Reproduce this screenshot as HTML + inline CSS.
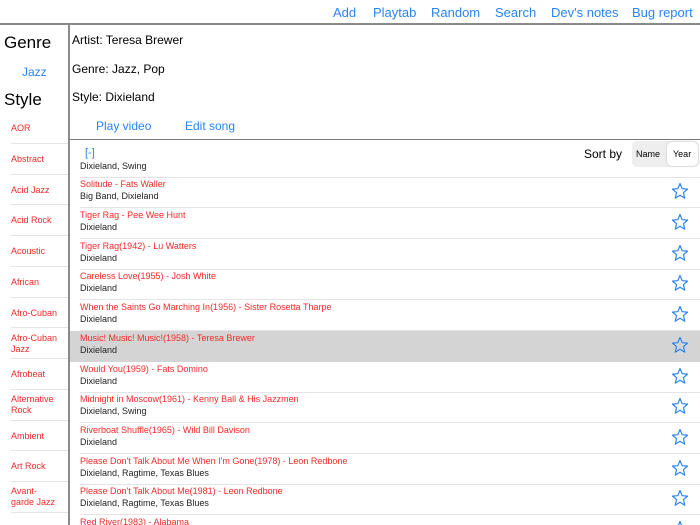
<!DOCTYPE html>
<html><head><meta charset="utf-8"><style>
*{margin:0;padding:0;box-sizing:border-box}
html,body{width:700px;height:525px;overflow:hidden}
body{background:#fff;font-family:"Liberation Sans",sans-serif;position:relative;color:#000}
.a{position:absolute;white-space:nowrap}
.nav{top:5px;font-size:13px;color:#2a84f6}
.blue{color:#2a84f6}
.side{left:11px;font-size:9px;color:#f42a2a;line-height:11px}
.sep{position:absolute;height:1px;background:#e4e4e4}
.row{position:absolute;left:0;width:630px;height:31px}
.row .t{position:absolute;left:10px;top:2px;font-size:9px;color:#f42a2a;white-space:nowrap}
.row .s{position:absolute;left:10px;top:14px;font-size:9px;color:#222;white-space:nowrap}
.row svg{position:absolute;left:601px;top:5px}
.row .l{position:absolute;left:10px;right:0;bottom:0;height:1px;background:#e4e4e4}
</style></head><body>
<div class="a nav" style="left:333px">Add</div>
<div class="a nav" style="left:373px">Playtab</div>
<div class="a nav" style="left:431px">Random</div>
<div class="a nav" style="left:495px">Search</div>
<div class="a nav" style="left:551px">Dev's notes</div>
<div class="a nav" style="left:632px">Bug report</div>
<div class="a" style="left:0;top:23px;width:700px;height:2px;background:#8a8a8a"></div>
<div class="a" style="left:68px;top:24px;width:2px;height:501px;background:#8a8a8a"></div>

<div class="a" style="left:4px;top:33px;font-size:17px">Genre</div>
<div class="a blue" style="left:22px;top:65px;font-size:12px">Jazz</div>
<div class="a" style="left:4px;top:90px;font-size:17px">Style</div>

<div class="a" style="left:72px;top:33px;font-size:12px">Artist: Teresa Brewer</div>
<div class="a" style="left:72px;top:62px;font-size:12px">Genre: Jazz, Pop</div>
<div class="a" style="left:72px;top:90px;font-size:12px">Style: Dixieland</div>
<div class="a blue" style="left:96px;top:119px;font-size:12px">Play video</div>
<div class="a blue" style="left:185px;top:119px;font-size:12px">Edit song</div>
<div class="a" style="left:70px;top:139px;width:630px;height:1px;background:#777"></div>

<div class="a side" style="top:123px">AOR</div>
<div class="a side" style="top:154px">Abstract</div>
<div class="a side" style="top:185px">Acid Jazz</div>
<div class="a side" style="top:215px">Acid Rock</div>
<div class="a side" style="top:246px">Acoustic</div>
<div class="a side" style="top:277px">African</div>
<div class="a side" style="top:308px">Afro-Cuban</div>
<div class="a side" style="top:333px">Afro-Cuban<br>Jazz</div>
<div class="a side" style="top:369px">Afrobeat</div>
<div class="a side" style="top:394px">Alternative<br>Rock</div>
<div class="a side" style="top:431px">Ambient</div>
<div class="a side" style="top:461px">Art Rock</div>
<div class="a side" style="top:486px">Avant-<br>garde Jazz</div>
<div class="sep" style="left:11px;width:57px;top:143px"></div>
<div class="sep" style="left:11px;width:57px;top:174px"></div>
<div class="sep" style="left:11px;width:57px;top:204px"></div>
<div class="sep" style="left:11px;width:57px;top:235px"></div>
<div class="sep" style="left:11px;width:57px;top:266px"></div>
<div class="sep" style="left:11px;width:57px;top:297px"></div>
<div class="sep" style="left:11px;width:57px;top:327px"></div>
<div class="sep" style="left:11px;width:57px;top:358px"></div>
<div class="sep" style="left:11px;width:57px;top:389px"></div>
<div class="sep" style="left:11px;width:57px;top:420px"></div>
<div class="sep" style="left:11px;width:57px;top:450px"></div>
<div class="sep" style="left:11px;width:57px;top:481px"></div>
<div class="sep" style="left:11px;width:57px;top:512px"></div>

<div class="a" style="left:70px;top:160px;width:630px;height:365px;overflow:hidden">
<div class="row" style="top:-13px"><div class="s">Dixieland, Swing</div><div class="l"></div></div>
<div class="row" style="top:17px"><div class="t">Solitude - Fats Waller</div><div class="s">Big Band, Dixieland</div><svg width="18" height="18" viewBox="0 0 24 24"><path d="M12 2l2.9 6.9 7.1.6-5.4 4.7 1.7 7.3L12 17.6 5.7 21.5l1.7-7.3L2 9.5l7.1-.6z" fill="none" stroke="#2a84f6" stroke-width="1.6" stroke-linejoin="round"/></svg><div class="l"></div></div>
<div class="row" style="top:48px"><div class="t">Tiger Rag - Pee Wee Hunt</div><div class="s">Dixieland</div><svg width="18" height="18" viewBox="0 0 24 24"><path d="M12 2l2.9 6.9 7.1.6-5.4 4.7 1.7 7.3L12 17.6 5.7 21.5l1.7-7.3L2 9.5l7.1-.6z" fill="none" stroke="#2a84f6" stroke-width="1.6" stroke-linejoin="round"/></svg><div class="l"></div></div>
<div class="row" style="top:79px"><div class="t">Tiger Rag(1942) - Lu Watters</div><div class="s">Dixieland</div><svg width="18" height="18" viewBox="0 0 24 24"><path d="M12 2l2.9 6.9 7.1.6-5.4 4.7 1.7 7.3L12 17.6 5.7 21.5l1.7-7.3L2 9.5l7.1-.6z" fill="none" stroke="#2a84f6" stroke-width="1.6" stroke-linejoin="round"/></svg><div class="l"></div></div>
<div class="row" style="top:109px"><div class="t">Careless Love(1955) - Josh White</div><div class="s">Dixieland</div><svg width="18" height="18" viewBox="0 0 24 24"><path d="M12 2l2.9 6.9 7.1.6-5.4 4.7 1.7 7.3L12 17.6 5.7 21.5l1.7-7.3L2 9.5l7.1-.6z" fill="none" stroke="#2a84f6" stroke-width="1.6" stroke-linejoin="round"/></svg><div class="l"></div></div>
<div class="row" style="top:140px"><div class="t">When the Saints Go Marching In(1956) - Sister Rosetta Tharpe</div><div class="s">Dixieland</div><svg width="18" height="18" viewBox="0 0 24 24"><path d="M12 2l2.9 6.9 7.1.6-5.4 4.7 1.7 7.3L12 17.6 5.7 21.5l1.7-7.3L2 9.5l7.1-.6z" fill="none" stroke="#2a84f6" stroke-width="1.6" stroke-linejoin="round"/></svg><div class="l"></div></div>
<div class="row" style="top:171px;background:#d4d4d4"><div class="t">Music! Music! Music!(1958) - Teresa Brewer</div><div class="s">Dixieland</div><svg width="18" height="18" viewBox="0 0 24 24"><path d="M12 2l2.9 6.9 7.1.6-5.4 4.7 1.7 7.3L12 17.6 5.7 21.5l1.7-7.3L2 9.5l7.1-.6z" fill="none" stroke="#2a84f6" stroke-width="1.6" stroke-linejoin="round"/></svg></div>
<div class="row" style="top:202px"><div class="t">Would You(1959) - Fats Domino</div><div class="s">Dixieland</div><svg width="18" height="18" viewBox="0 0 24 24"><path d="M12 2l2.9 6.9 7.1.6-5.4 4.7 1.7 7.3L12 17.6 5.7 21.5l1.7-7.3L2 9.5l7.1-.6z" fill="none" stroke="#2a84f6" stroke-width="1.6" stroke-linejoin="round"/></svg><div class="l"></div></div>
<div class="row" style="top:232px"><div class="t">Midnight in Moscow(1961) - Kenny Ball &amp; His Jazzmen</div><div class="s">Dixieland, Swing</div><svg width="18" height="18" viewBox="0 0 24 24"><path d="M12 2l2.9 6.9 7.1.6-5.4 4.7 1.7 7.3L12 17.6 5.7 21.5l1.7-7.3L2 9.5l7.1-.6z" fill="none" stroke="#2a84f6" stroke-width="1.6" stroke-linejoin="round"/></svg><div class="l"></div></div>
<div class="row" style="top:263px"><div class="t">Riverboat Shuffle(1965) - Wild Bill Davison</div><div class="s">Dixieland</div><svg width="18" height="18" viewBox="0 0 24 24"><path d="M12 2l2.9 6.9 7.1.6-5.4 4.7 1.7 7.3L12 17.6 5.7 21.5l1.7-7.3L2 9.5l7.1-.6z" fill="none" stroke="#2a84f6" stroke-width="1.6" stroke-linejoin="round"/></svg><div class="l"></div></div>
<div class="row" style="top:294px"><div class="t">Please Don't Talk About Me When I'm Gone(1978) - Leon Redbone</div><div class="s">Dixieland, Ragtime, Texas Blues</div><svg width="18" height="18" viewBox="0 0 24 24"><path d="M12 2l2.9 6.9 7.1.6-5.4 4.7 1.7 7.3L12 17.6 5.7 21.5l1.7-7.3L2 9.5l7.1-.6z" fill="none" stroke="#2a84f6" stroke-width="1.6" stroke-linejoin="round"/></svg><div class="l"></div></div>
<div class="row" style="top:324px"><div class="t">Please Don't Talk About Me(1981) - Leon Redbone</div><div class="s">Dixieland, Ragtime, Texas Blues</div><svg width="18" height="18" viewBox="0 0 24 24"><path d="M12 2l2.9 6.9 7.1.6-5.4 4.7 1.7 7.3L12 17.6 5.7 21.5l1.7-7.3L2 9.5l7.1-.6z" fill="none" stroke="#2a84f6" stroke-width="1.6" stroke-linejoin="round"/></svg><div class="l"></div></div>
<div class="row" style="top:355px;height:10px;overflow:hidden"><div class="t">Red River(1983) - Alabama</div><svg width="18" height="18" viewBox="0 0 24 24"><path d="M12 2l2.9 6.9 7.1.6-5.4 4.7 1.7 7.3L12 17.6 5.7 21.5l1.7-7.3L2 9.5l7.1-.6z" fill="none" stroke="#2a84f6" stroke-width="1.6" stroke-linejoin="round"/></svg></div>
</div>

<div class="a" style="left:70px;top:140px;width:630px;height:22px;background:#fff"></div>
<div class="a blue" style="left:85px;top:147px;font-size:11px">[-]</div>
<div class="a" style="left:584px;top:147px;font-size:12px">Sort by</div>
<div class="a" style="left:632px;top:141px;width:67px;height:26px;background:#eeeeee;border-radius:5px"></div>
<div class="a" style="left:667px;top:142px;width:31px;height:24px;background:#fff;border-radius:5px;box-shadow:0 0 2px rgba(0,0,0,.2)"></div>
<div class="a" style="left:636px;top:149px;font-size:9px">Name</div>
<div class="a" style="left:673px;top:149px;font-size:9px">Year</div>
</body></html>
